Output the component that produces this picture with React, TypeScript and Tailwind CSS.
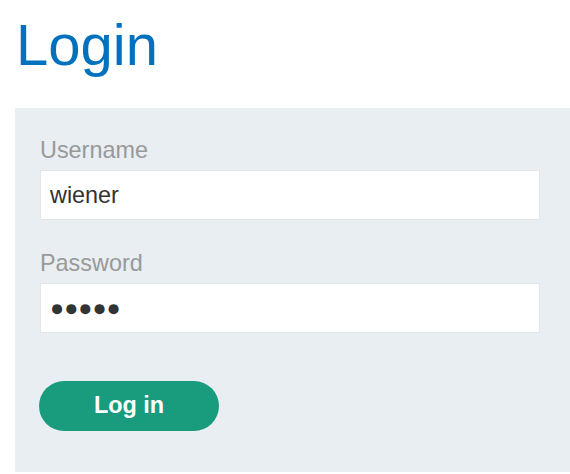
export default function App() {
  return (
    <div className="min-h-screen bg-white overflow-hidden" style={{ fontFamily: '"Liberation Sans", Arial, sans-serif' }}>
      <h1 className="pl-[16px] pt-[13px] text-[58px] leading-[64px] text-[#0071bc] font-normal">
        Login
      </h1>
      <div className="ml-[15px] mt-[31px] w-[600px] bg-[#e8eef1] pl-[25px] pt-[29px] pb-[41px]">
        <form onSubmit={(e) => e.preventDefault()}>
          <label htmlFor="username" className="block text-[23.4px] leading-[26px] text-[#999999] mb-[7px]">
            Username
          </label>
          <input
            id="username"
            type="text"
            defaultValue="wiener"
            className="block w-[500px] h-[50px] bg-white border border-[#e3e6e8] pl-[9px] pr-[9px] text-[23.4px] text-[#333333] outline-none"
          />
          <label htmlFor="password" className="block mt-[30px] text-[23.4px] leading-[26px] text-[#999999] mb-[7px]">
            Password
          </label>
          {/* masked value drawn as large dots, the way the reference browser shows it */}
          <input
            id="password"
            type="text"
            readOnly
            value={"\u25CF\u25CF\u25CF\u25CF\u25CF"}
            className="block w-[500px] h-[50px] bg-white border border-[#e3e6e8] pl-[9px] pr-[9px] text-[23.4px] text-[#333333] outline-none"
          />
          <button
            type="submit"
            className="block -ml-[1px] mt-[48px] w-[180px] h-[50px] rounded-full bg-[#189c7d] text-white text-[23.4px] font-bold"
          >
            Log in
          </button>
        </form>
      </div>
    </div>
  );
}
